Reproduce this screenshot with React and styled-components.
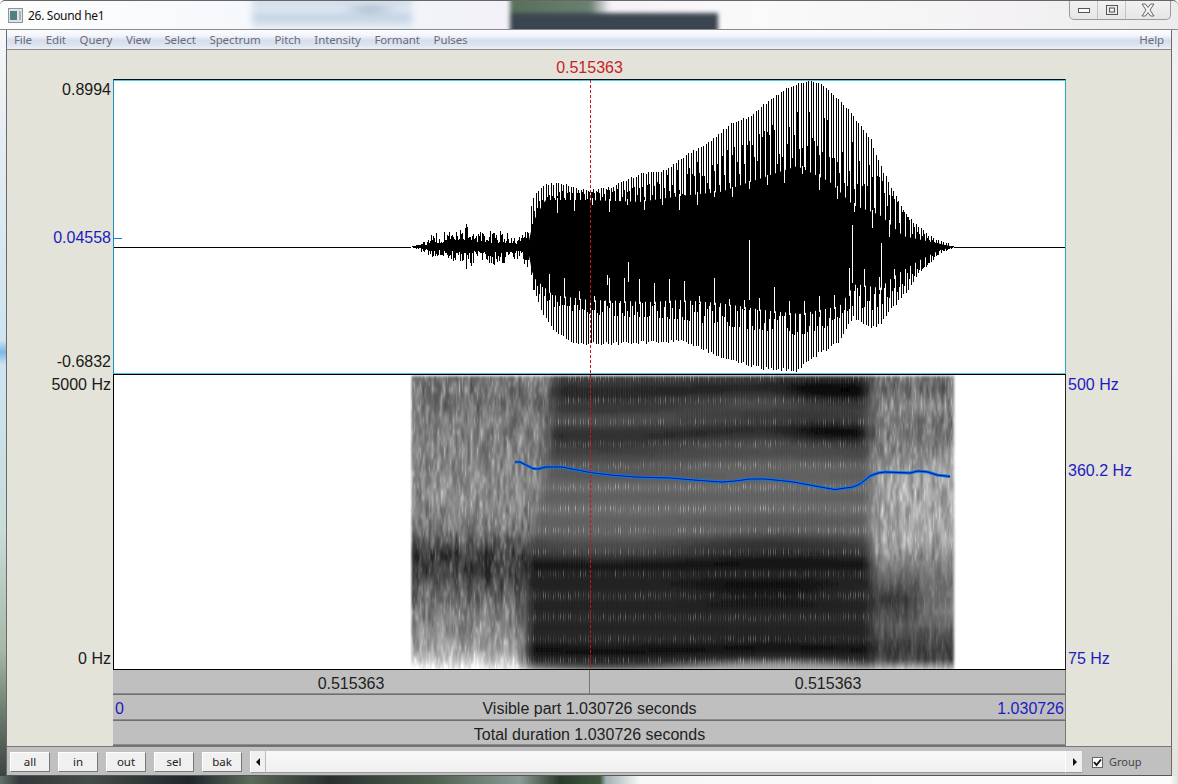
import React from "react";
import styled, { createGlobalStyle } from "styled-components";

const GlobalStyle = createGlobalStyle`
  html, body { margin: 0; padding: 0; background: #fff; }
  body { font-family: "Liberation Sans", Arial, sans-serif; }
`;

// ---- helpers for the drawings ----
function interp(pts, x) {
  if (x <= pts[0][0]) return pts[0][1];
  for (let i = 1; i < pts.length; i++) {
    if (x <= pts[i][0]) {
      const [x0, y0] = pts[i - 1];
      const [x1, y1] = pts[i];
      return y0 + ((y1 - y0) * (x - x0)) / (x1 - x0);
    }
  }
  return pts[pts.length - 1][1];
}

function makeRandom(seed) {
  let a = seed;
  return () => {
    a = (a + 0x6d2b79f5) | 0;
    let t = Math.imul(a ^ (a >>> 15), 1 | a);
    t = (t + Math.imul(t ^ (t >>> 7), 61 | t)) ^ t;
    return ((t ^ (t >>> 14)) >>> 0) / 4294967296;
  };
}

const hash = (i, j) => {
  const s = Math.sin(i * 127.1 + j * 311.7) * 43758.5453;
  return s - Math.floor(s);
};
const smooth = (a, b, x) => {
  const t = Math.min(1, Math.max(0, (x - a) / (b - a)));
  return t * t * (3 - 2 * t);
};
function vnoise(x, y) {
  const i = Math.floor(x);
  const j = Math.floor(y);
  const u = smooth(0, 1, x - i);
  const v = smooth(0, 1, y - j);
  const a = hash(i, j) + (hash(i + 1, j) - hash(i, j)) * u;
  const b = hash(i, j + 1) + (hash(i + 1, j + 1) - hash(i, j + 1)) * u;
  return a + (b - a) * v;
}

// ---- waveform, all numbers are page pixels ----
const OUTER_TOP = [[528, 232], [531, 200], [535, 192], [545, 184], [560, 182], [575, 187], [590, 190], [613, 185], [640, 173], [667, 168], [685, 155], [713, 138], [730, 122], [750, 115], [770, 98], [787, 87], [803, 81], [817, 81], [827, 88], [843, 103], [853, 115], [870, 137], [880, 165], [890, 185], [903, 208], [913, 222], [930, 235], [947, 242], [955, 247]];
const MID_TOP = [[528, 240], [533, 208], [545, 190], [590, 192], [640, 186], [680, 168], [700, 160], [730, 148], [760, 132], [790, 112], [810, 108], [830, 118], [850, 140], [880, 180], [900, 208], [920, 232], [940, 245], [955, 247]];
const DENSE_TOP = [[528, 245], [533, 222], [545, 200], [590, 200], [640, 202], [680, 196], [720, 192], [750, 182], [797, 166], [830, 182], [853, 205], [880, 215], [903, 236], [955, 247]];
const DENSE_BOT = [[528, 250], [533, 277], [553, 295], [590, 300], [650, 302], [680, 300], [720, 303], [763, 310], [800, 314], [840, 306], [855, 284], [880, 288], [893, 277], [907, 268], [920, 260], [940, 250], [955, 247]];
const MID_BOT = [[528, 255], [533, 290], [553, 308], [590, 315], [650, 318], [680, 320], [720, 325], [763, 332], [797, 336], [830, 326], [853, 305], [870, 312], [893, 295], [920, 270], [940, 252], [955, 247]];
const OUTER_BOT = [[528, 262], [533, 290], [540, 310], [553, 333], [575, 345], [620, 345], [680, 342], [697, 348], [723, 360], [763, 370], [797, 372], [813, 358], [837, 345], [853, 318], [870, 330], [880, 325], [893, 308], [907, 292], [920, 272], [940, 255], [955, 247]];
const FRIC_TOP = [[410, 247], [420, 243], [432, 232], [446, 232], [458, 228], [465, 223], [480, 231], [500, 231], [520, 236], [528, 226]];
const FRIC_BOT = [[410, 247], [420, 251], [432, 259], [445, 259], [458, 263], [466, 271], [480, 259], [500, 269], [520, 259], [528, 270]];

function buildWave() {
  const rnd = makeRandom(26);
  let d = "M114 247.5H411M955 247.5H1066";
  let slits = "M749.5 240V300M852.5 225V283M881.5 243V290M628.5 262V282M607.5 275V285";
  for (let x = 410; x < 528; x++) {
    const t = interp(FRIC_TOP, x);
    const b = interp(FRIC_BOT, x);
    const y1 = 247 - (247 - t) * (0.25 + 0.75 * rnd() ** 1.5);
    const y2 = 247 + (b - 247) * (0.25 + 0.75 * rnd() ** 1.5);
    d += `M${x + 0.5} ${y1.toFixed(1)}V${y2.toFixed(1)}`;
  }
  let k = 0;
  for (let f = 528; f < 955; f += 2.5) {
    const x = Math.round(f);
    const top = interp(OUTER_TOP, f) + rnd() * 2.5;
    const bot = interp(OUTER_BOT, f) - rnd() * 3;
    d += `M${x + 0.5} ${top.toFixed(1)}V${bot.toFixed(1)}`;
    const mt = interp(MID_TOP, f);
    const dt = interp(DENSE_TOP, f);
    const mb = interp(MID_BOT, f);
    const db = interp(DENSE_BOT, f);
    const a = mt + (dt - mt) * rnd() ** 2;
    const b = mb + (db - mb) * rnd() ** 2;
    d += `M${x + 1.5} ${a.toFixed(1)}V${b.toFixed(1)}`;
    if (k % 6 === 2 && f > 540 && f < 900) {
      slits += `M${x + 1.5} ${(db - 4 - rnd() * 22).toFixed(1)}V${(db + 2).toFixed(1)}`;
    }
    if (k % 7 === 4 && f > 540 && f < 890) {
      slits += `M${x + 1.5} ${(dt - 2).toFixed(1)}V${(dt + 3 + rnd() * 14).toFixed(1)}`;
    }
    k++;
  }
  let solid = "M528 247";
  for (let x = 528; x <= 955; x += 3) solid += `L${x} ${interp(DENSE_TOP, x)}`;
  for (let x = 955; x >= 528; x -= 3) solid += `L${x} ${interp(DENSE_BOT, x)}`;
  solid += "Z";
  return { d, solid, slits };
}
const WAVE = buildWave();

// ---- spectrogram ----
const VOICED = [[376, 52], [392, 40], [412, 72], [434, 44], [452, 74], [475, 96], [510, 102], [535, 88], [550, 52], [565, 24], [590, 38], [610, 38], [630, 40], [650, 22], [660, 38], [665, 100], [669, 165]];
const FRIC_LEFT = [[376, 118], [400, 112], [440, 128], [500, 138], [530, 118], [555, 62], [575, 66], [600, 104], [630, 140], [650, 160], [662, 205], [669, 240]];
const FRIC_RIGHT = [[376, 125], [388, 105], [405, 135], [435, 115], [470, 160], [540, 165], [565, 125], [600, 60], [625, 90], [650, 58], [660, 72], [669, 185]];
const EDGE = [[376, 553], [450, 546], [550, 528], [669, 524]];

function specGray(x, y) {
  const streak = vnoise(x / 3, y / 15) - 0.5;
  const fine = vnoise(x / 1.5 + 40, y / 6) - 0.5;
  const fric = x < 700 ? interp(FRIC_LEFT, y) : interp(FRIC_RIGHT, y);
  const calm = x >= 700 && y > 560 ? 0.5 : 1;
  let frame = fric + (streak * 56 + fine * 22 + Math.max(0, fine) ** 2 * 130) * calm;
  if (x >= 700) {
    // the dark patch around 600 runs out before the end of the sound
    frame += smooth(905, 935, x) * Math.exp(-((y - 602) ** 2) / 500) * 50;
  }
  const h = Math.cos((2 * Math.PI * (y - 650)) / 21.7);
  const wavy = y + Math.sin(x / 55) * 6 * (y < 560 ? 1 : 0.5);
  let voiced = interp(VOICED, wavy) - 5 * h;
  const rise = smooth(760, 825, x) * (1 - smooth(852, 870, x));
  voiced -= rise * 34 * Math.exp(-((y - 392) ** 2) / 170);
  voiced -= rise * 28 * Math.exp(-((y - 433) ** 2) / 170);
  voiced -= smooth(650, 740, x) * (1 - smooth(790, 860, x)) * 16 * Math.exp(-((y - 592) ** 2) / 260);
  const col = (x % 2.5) < 1 ? 1 : 0;
  voiced += col * Math.max(0, -h) ** 3 * (4 + 80 * hash(x, Math.round(y / 21.7)) ** 3);
  voiced += col * 4;
  const w = smooth(interp(EDGE, y) - 12, interp(EDGE, y) + 12, x) * (1 - smooth(860, 882, x));
  let g = frame + (voiced - frame) * w;
  g += (255 - g) * (1 - smooth(409, 413, x));
  g += (255 - g) * smooth(951, 956, x);
  return Math.max(0, Math.min(255, g));
}

function buildSpec() {
  const byLevel = {};
  for (let y = 376; y < 670; y += 2) {
    let runStart = 410;
    let runLevel = null;
    for (let x = 410; x <= 956; x++) {
      const level = x === 956 ? -1 : Math.round(specGray(x, y + 1) / 8) * 8;
      if (level !== runLevel) {
        if (runLevel !== null) {
          byLevel[runLevel] = (byLevel[runLevel] || "") + `M${runStart} ${y}h${x - runStart}v2h${runStart - x}z`;
        }
        runStart = x;
        runLevel = level;
      }
    }
  }
  return Object.entries(byLevel).map(([level, d]) => ({ level: Math.min(255, Number(level)), d }));
}
const SPEC = buildSpec();

const PITCH = [[515, 462], [520, 462], [527, 465.5], [533, 468.5], [538, 469], [546, 467], [562, 467], [575, 469.5], [590, 472.5], [610, 475], [636, 477], [670, 478], [700, 480.5], [722, 482], [735, 481], [750, 479], [765, 479], [790, 481.5], [810, 485], [826, 488], [835, 489.5], [853, 487], [860, 484], [870, 476], [878, 473], [885, 472], [910, 473], [918, 471], [928, 472], [937, 475], [950, 476.5]]
  .map((p) => p.join(","))
  .join(" ");

// ---- window chrome ----
const Frame = styled.div`
  width: 1178px;
  height: 784px;
  display: flex;
  flex-direction: column;
  overflow: hidden;
`;

const TitleBar = styled.div`
  height: 30px;
  flex: none;
  box-sizing: border-box;
  position: relative;
  isolation: isolate;
  overflow: hidden;
  display: flex;
  align-items: flex-start;
  padding: 0 7px 0 8px;
  border-top: 1px solid #666;
  border-bottom: 1px solid #8a8a8a;
  border-radius: 5px 5px 0 0;
  background: linear-gradient(to right, #fdfdfd, #f6f9fc 240px, #f1f4f9 420px, #f5eff7 560px, #fafafa 760px, #f4f2f4 1000px, #ececec);

  /* the blurred windows behind the glass frame */
  &::before {
    content: "";
    position: absolute;
    z-index: -1;
    left: 252px;
    top: -4px;
    width: 160px;
    height: 34px;
    filter: blur(3px);
    background:
      radial-gradient(ellipse 30px 5px at 118px 12px, #9fb0c4, transparent),
      linear-gradient(#ccd9e8, #e0e9f4 14px, #bccde0 20px, #dce6f1 27px, #ecf1f7);
  }

  &::after {
    content: "";
    position: absolute;
    z-index: -1;
    left: 510px;
    top: -4px;
    width: 208px;
    height: 36px;
    filter: blur(2px);
    background:
      linear-gradient(to right, #56705a, #6a8070 80px, transparent 100px) 0 0 / 100% 16px no-repeat,
      linear-gradient(#3c4652, #3a444e) 0 16px / 100% 20px no-repeat;
  }
`;

const AppIcon = styled.svg`
  width: 15px;
  height: 15px;
  margin-top: 7px;
  flex: none;
`;

const WindowTitle = styled.div`
  margin: 7px 0 0 5px;
  font: 12px/16px "Noto Sans", "Open Sans", sans-serif;
  letter-spacing: -0.3px;
  color: #111;
`;

const WindowButtons = styled.div`
  margin: -1px 0 0 auto;
  width: 102px;
  height: 20px;
  box-sizing: border-box;
  display: flex;
  border: 1px solid #9a9a9a;
  border-top: none;
  border-radius: 0 0 5px 5px;
  background: linear-gradient(#f2f2f2, #e6e6e6);
`;

const WindowButton = styled.div`
  flex: ${(p) => (p.$wide ? "1" : "none")};
  width: ${(p) => (p.$wide ? "auto" : "27px")};
  display: flex;
  align-items: center;
  justify-content: center;
  border-left: ${(p) => (p.$first ? "none" : "1px solid #c4c4c4")};
`;

const Middle = styled.div`
  flex: 1;
  display: flex;
  min-height: 0;
`;

const Edge = styled.div`
  width: ${(p) => p.$w}px;
  flex: none;
  background: ${(p) => p.$bg};
`;

const BottomEdge = styled.div`
  height: 8px;
  flex: none;
  background: linear-gradient(to right, #62706a, #33393a 20px, #444c48 90px, #20262a 190px, #5a6a58 250px, #2a3030 330px, #4d5f4d 430px, #8a9a96 520px, #2a3a2a 560px, #3e5a40 600px, #a0b0b4 606px, #f8f8f8 640px, #fcfcfc 1170px, #e0e0e0);
`;

const Window = styled.div`
  flex: 1;
  min-width: 0;
  display: flex;
  flex-direction: column;
  border-left: 1px solid #6a6a6a;
  border-right: 1px solid #6a6a6a;
  border-bottom: 1px solid #555;
`;

const MenuBar = styled.div`
  height: 20px;
  flex: none;
  box-sizing: border-box;
  display: flex;
  align-items: center;
  padding: 0 7px;
  gap: 13.7px;
  border-bottom: 1px solid #8d8d8d;
  background: linear-gradient(#fbfcfe, #f2f5fa 30%, #d6deed 55%, #dde3f0 80%, #eef0f5);
`;

const MenuItem = styled.span`
  font: 11.5px/16px "Noto Sans", "Open Sans", sans-serif;
  color: #6a6c78;
  letter-spacing: -0.1px;
  margin-left: ${(p) => (p.$push ? "auto" : "0")};
`;

// ---- sound editor body ----
const Editor = styled.div`
  flex: 1;
  min-height: 0;
  display: grid;
  grid-template-columns: 106px 953px 1fr;
  grid-template-rows: 29px 591px 1fr;
  background: #e3e3d9;
`;

const CursorLabel = styled.div`
  grid-column: 2;
  grid-row: 1;
  text-align: center;
  color: #c81e28;
  font-size: 16px;
  line-height: 18px;
  padding-top: 9px;
`;

const Plot = styled.div`
  grid-column: 2;
  grid-row: 2;
  position: relative;
  display: flex;
  flex-direction: column;
`;

const WavePanel = styled.div`
  height: 295px;
  flex: none;
  box-sizing: border-box;
  background: #fff;
  border-top: 1px solid #04141c;
  border-left: 1px solid #1c8fb4;
  border-right: 1px solid #2aa8c4;
  border-bottom: 1px solid #55c8de;
  box-shadow: inset 0 1px 0 #55c8de;
`;

const SpecPanel = styled.div`
  height: 296px;
  flex: none;
  box-sizing: border-box;
  background: #fff;
  border: 1px solid #000;
  border-right-color: #222;
`;

const PlotSvg = styled.svg`
  display: block;
  width: 951px;
  height: ${(p) => p.$h}px;
`;

const CursorLine = styled.div`
  position: absolute;
  left: 477px;
  top: 1px;
  bottom: 0;
  width: 1px;
  background: repeating-linear-gradient(#d01020 0 3px, transparent 3px 5px);
`;

const LeftWaveAxis = styled.div`
  grid-column: 1;
  grid-row: 2;
  display: grid;
  align-content: start;
  grid-template-rows: 148px 124px 18px 5px 18px 256px 18px;
  padding: 2px 2px 0 0;
`;

const RightAxis = styled.div`
  grid-column: 3;
  grid-row: 2;
  display: grid;
  align-content: start;
  grid-template-rows: 86px 188px 18px;
  padding: 297px 0 0 2px;
`;

const AxisLabel = styled.div`
  font-size: 16px;
  line-height: 18px;
  height: 18px;
  text-align: ${(p) => (p.$left ? "left" : "right")};
  color: ${(p) => (p.$blue ? "#1c1cc0" : "#1a1a1a")};
  white-space: nowrap;
`;

const Bars = styled.div`
  grid-column: 2;
  grid-row: 3;
  display: flex;
  flex-direction: column;
`;

const BarRow = styled.div`
  flex: ${(p) => p.$h}px 0 0;
  box-sizing: border-box;
  display: grid;
  grid-template-columns: ${(p) => p.$cols};
  align-items: center;
  padding: ${(p) => p.$top}px 2px 0 2px;
  background: #bfbfbf;
  border-bottom: 1px solid #6f6f6f;
  box-shadow: inset 0 -1px 0 #8c8c8c, inset -1px 0 0 #777;
  font-size: 16px;
  line-height: 18px;
  color: #1e1e1e;
`;

const TimeRow = styled(BarRow)`
  padding: 0;
`;

const BarCell = styled.div`
  height: 100%;
  box-sizing: border-box;
  padding-top: 3px;
  display: flex;
  align-items: center;
  justify-content: center;
  border-left: ${(p) => (p.$divide ? "1px solid #777" : "none")};
`;

const BarText = styled.span`
  color: ${(p) => (p.$blue ? "#1c1cc0" : "inherit")};
  text-align: ${(p) => p.$align || "center"};
`;

// ---- bottom button row ----
const BottomBar = styled.div`
  height: 29px;
  flex: none;
  box-sizing: border-box;
  display: flex;
  align-items: center;
  padding: 2px 0 0 3px;
  background: #c0c0c0;
  border-top: 1px solid #777;
`;

const SmallButton = styled.div`
  width: 40px;
  height: 20px;
  box-sizing: border-box;
  margin-right: 8px;
  display: flex;
  align-items: center;
  justify-content: center;
  background: #f0f0f0;
  border-top: 1px solid #fff;
  border-left: 1px solid #fff;
  border-right: 1px solid #777;
  border-bottom: 1px solid #777;
  font: 11.5px/14px "Noto Sans", "Open Sans", sans-serif;
  color: #222;
`;

const ScrollBar = styled.div`
  width: 833px;
  height: 22px;
  display: flex;
`;

const ScrollArrow = styled.div`
  width: ${(p) => p.$w}px;
  flex: none;
  box-sizing: border-box;
  display: flex;
  align-items: center;
  justify-content: center;
  background: #f0f0f0;
  border-right: 1px solid #bbb;
  border-left: 1px solid #fff;
  border-bottom: 1px solid #999;
`;

const ScrollTrack = styled.div`
  flex: 1;
  box-sizing: border-box;
  background: linear-gradient(#f8f8f8, #f0f0f0);
  border-bottom: 1px solid #999;
`;

const GroupCheck = styled.label`
  margin-left: 9px;
  display: flex;
  align-items: center;
  gap: 6px;
  font: 11px/14px "Noto Sans", "Open Sans", sans-serif;
  color: #444;
`;

const CheckBox = styled.span`
  width: 11px;
  height: 11px;
  box-sizing: border-box;
  display: flex;
  align-items: center;
  justify-content: center;
  background: #fff;
  border: 1px solid #666;
`;

const MENUS = ["File", "Edit", "Query", "View", "Select", "Spectrum", "Pitch", "Intensity", "Formant", "Pulses"];
const ZOOMS = ["all", "in", "out", "sel", "bak"];

export default function App() {
  return (
    <Frame>
      <GlobalStyle />
      <TitleBar>
        <AppIcon viewBox="0 0 15 15">
          <rect x="0.5" y="0.5" width="14" height="14" fill="#dfe4e6" stroke="#8c9698" />
          <rect x="2" y="3" width="7" height="9" fill="#52807e" />
          <rect x="11" y="3" width="2" height="9" fill="#a6b2b4" />
        </AppIcon>
        <WindowTitle>26. Sound he1</WindowTitle>
        <WindowButtons>
          <WindowButton $first>
            <svg width="14" height="8" viewBox="0 0 14 8">
              <rect x="1.5" y="2.5" width="11" height="4" fill="#fafafa" stroke="#555" />
            </svg>
          </WindowButton>
          <WindowButton>
            <svg width="14" height="12" viewBox="0 0 14 12">
              <rect x="1.5" y="1.5" width="11" height="9" fill="none" stroke="#555" />
              <rect x="4.5" y="4" width="5" height="4" fill="none" stroke="#555" />
            </svg>
          </WindowButton>
          <WindowButton $wide>
            <svg width="16" height="14" viewBox="0 0 16 14">
              <path d="M2 1h3.5L8 4.5 10.5 1H14l-4 6 4 6h-3.5L8 9.5 5.5 13H2l4-6z" fill="#f4f4f4" stroke="#666" />
            </svg>
          </WindowButton>
        </WindowButtons>
      </TitleBar>
      <Middle>
        <Edge $w={6} $bg="linear-gradient(#f6f8fa, #e8eef2 90px, #d4e6f0 250px, #cfe4f2 310px, #7fb8e4 322px, #cfe4f2 335px, #c8dcd8 500px, #a8b8a8 620px, #6e7e70 680px, #3c4440)" />
        <Window>
          <MenuBar>
            {MENUS.map((m) => (
              <MenuItem key={m}>{m}</MenuItem>
            ))}
            <MenuItem $push>Help</MenuItem>
          </MenuBar>
          <Editor>
            <CursorLabel>0.515363</CursorLabel>
            <LeftWaveAxis>
              <AxisLabel>0.8994</AxisLabel>
              <AxisLabel $blue>0.04558</AxisLabel>
              <AxisLabel>-0.6832</AxisLabel>
              <span />
              <AxisLabel>5000 Hz</AxisLabel>
              <span />
              <AxisLabel>0 Hz</AxisLabel>
            </LeftWaveAxis>
            <Plot>
              <WavePanel>
                <PlotSvg $h={293} viewBox="114 80 951 293">
                  <path d={WAVE.solid} fill="#000" />
                  <path d={WAVE.d} stroke="#000" strokeWidth="1" fill="none" shapeRendering="crispEdges" />
                  <path d={WAVE.slits} stroke="#fff" strokeWidth="1" fill="none" shapeRendering="crispEdges" />
                  <path d="M114 238.5H122" stroke="#1c7cc8" strokeWidth="1" shapeRendering="crispEdges" />
                </PlotSvg>
              </WavePanel>
              <SpecPanel>
                <PlotSvg $h={294} viewBox="114 375 951 294">
                  <defs>
                    <filter id="specSoft" x="-2%" y="-2%" width="104%" height="104%">
                      <feGaussianBlur stdDeviation="0.6 1.4" />
                    </filter>
                  </defs>
                  <g filter="url(#specSoft)">
                    {SPEC.map(({ level, d }) => (
                      <path key={level} d={d} fill={`rgb(${level},${level},${level})`} shapeRendering="crispEdges" />
                    ))}
                  </g>
                  <polyline points={PITCH} fill="none" stroke="#0a78f0" strokeWidth="3" strokeLinejoin="round" />
                  <polyline points={PITCH} fill="none" stroke="#06188c" strokeWidth="1" strokeLinejoin="round" />
                </PlotSvg>
              </SpecPanel>
              <CursorLine />
            </Plot>
            <RightAxis>
              <AxisLabel $blue $left>500 Hz</AxisLabel>
              <AxisLabel $blue $left>360.2 Hz</AxisLabel>
              <AxisLabel $blue $left>75 Hz</AxisLabel>
            </RightAxis>
            <Bars>
              <TimeRow $h={25} $top={0} $cols="476px 1fr">
                <BarCell>0.515363</BarCell>
                <BarCell $divide>0.515363</BarCell>
              </TimeRow>
              <BarRow $h={26} $top={2} $cols="1fr auto 1fr">
                <BarText $blue $align="left">0</BarText>
                <BarText>Visible part 1.030726 seconds</BarText>
                <BarText $blue $align="right">1.030726</BarText>
              </BarRow>
              <BarRow $h={25} $top={4} $cols="1fr">
                <BarText>Total duration 1.030726 seconds</BarText>
              </BarRow>
            </Bars>
          </Editor>
          <BottomBar>
            {ZOOMS.map((z) => (
              <SmallButton key={z}>{z}</SmallButton>
            ))}
            <ScrollBar>
              <ScrollArrow $w={16}>
                <svg width="5" height="8" viewBox="0 0 5 8"><path d="M4 0v8L0 4z" fill="#111" /></svg>
              </ScrollArrow>
              <ScrollTrack />
              <ScrollArrow $w={18}>
                <svg width="5" height="8" viewBox="0 0 5 8"><path d="M1 0v8l4-4z" fill="#111" /></svg>
              </ScrollArrow>
            </ScrollBar>
            <GroupCheck>
              <CheckBox>
                <svg width="9" height="9" viewBox="0 0 9 9"><path d="M1 4l2.5 3L8 1.5" fill="none" stroke="#111" strokeWidth="1.8" /></svg>
              </CheckBox>
              Group
            </GroupCheck>
          </BottomBar>
        </Window>
        <Edge $w={6} $bg="linear-gradient(#f0f0f0, #f6f6f6 200px, #ececec 500px, #e4e4dc 740px)" />
      </Middle>
      <BottomEdge />
    </Frame>
  );
}
